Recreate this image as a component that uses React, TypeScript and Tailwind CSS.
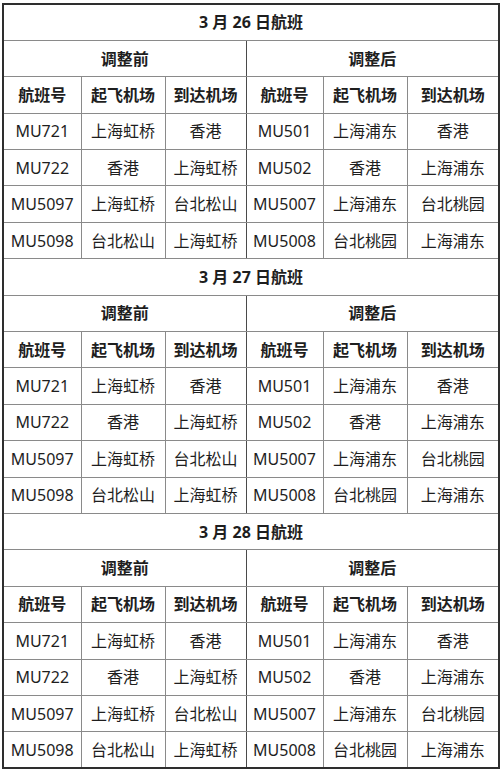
import React from "react";

type Row = [string, string, string, string, string, string];

const rows: Row[] = [
  ["MU721", "上海虹桥", "香港", "MU501", "上海浦东", "香港"],
  ["MU722", "香港", "上海虹桥", "MU502", "香港", "上海浦东"],
  ["MU5097", "上海虹桥", "台北松山", "MU5007", "上海浦东", "台北桃园"],
  ["MU5098", "台北松山", "上海虹桥", "MU5008", "台北桃园", "上海浦东"],
];

const days = ["3 月 26 日航班", "3 月 27 日航班", "3 月 28 日航班"];
const heads = ["航班号", "起飞机场", "到达机场"];

const cell = "border border-[#8a8a8a] text-center align-middle p-0";
const mid = "border-r-[#4a4a4a]";

export default function App() {
  return (
    <div
      className="w-[500px] h-[770px] bg-white pt-[3px] pl-[2px] text-[#1e1e1e]"
      style={{ fontFamily: '"Noto Sans", "Noto Sans CJK SC", sans-serif' }}
    >
      <table className="w-[496px] table-fixed border-collapse border-2 border-[#2e2e2e] text-[16px] leading-none">
        <colgroup>
          <col className="w-[78px]" />
          <col className="w-[84px]" />
          <col className="w-[81px]" />
          <col className="w-[77px]" />
          <col className="w-[84px]" />
          <col className="w-[92px]" />
        </colgroup>
        <tbody>
          {days.map((day) => (
            <React.Fragment key={day}>
              <tr className="h-[36.4px]">
                <td colSpan={6} className={`${cell} font-bold`}>
                  {day}
                </td>
              </tr>
              <tr className="h-[36.4px]">
                <td colSpan={3} className={`${cell} ${mid} font-bold`}>
                  调整前
                </td>
                <td colSpan={3} className={`${cell} font-bold`}>
                  调整后
                </td>
              </tr>
              <tr className="h-[36.4px]">
                {[...heads, ...heads].map((h, i) => (
                  <td key={i} className={`${cell} ${i === 2 ? mid : ""} font-bold`}>
                    {h}
                  </td>
                ))}
              </tr>
              {rows.map((r) => (
                <tr key={r[0]} className="h-[36.4px]">
                  {r.map((v, i) => (
                    <td key={i} className={`${cell} ${i === 2 ? mid : ""}`}>
                      {v}
                    </td>
                  ))}
                </tr>
              ))}
            </React.Fragment>
          ))}
        </tbody>
      </table>
    </div>
  );
}
